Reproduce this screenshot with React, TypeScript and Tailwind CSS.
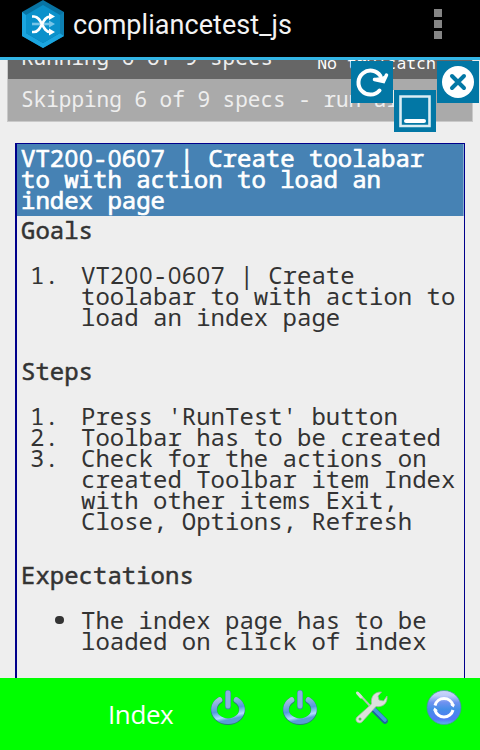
import React from "react";

const MONO = "font-['Droid_Sans_Mono','Noto_Sans_Mono','DejaVu_Sans_Mono',monospace]";

function AppLogo() {
  return (
    <svg className="ml-[21px] h-[49px] w-[44px] shrink-0" viewBox="0 0 44 49">
      <path d="M22 0 43 12 43 36 22 48 1 36 1 12Z" fill="#0873a3" />
      <path d="M1 12 5 15 5 33 22 43 39 33 43 36 22 48 1 36Z" fill="#1ba5df" />
      <path d="M39 15 43 12 43 36 39 33Z" fill="#0d7fb1" />
      <path d="M22 5 39 15 39 33 22 43 5 33 5 15Z" fill="#0a91cb" />
      <path d="M11 24H29" stroke="#76c5e8" strokeWidth="2.6" />
      <path d="M28 20.5 34 24 28 27.5Z" fill="#76c5e8" />
      <path d="M11 16.500h2c8 0 8 15.500 16 15.500M11 32h2c8 0 8-15.500 16-15.500" fill="none" stroke="#fff" strokeWidth="2.7" />
      <path d="M28 13 34 16.500 28 20ZM28 28.500 34 32 28 35.500Z" fill="#fff" />
    </svg>
  );
}

function PowerIcon({ id }: { id: string }) {
  return (
    <svg className="h-[38px] w-[38px]" viewBox="0 0 38 38">
      <defs>
        <linearGradient id={id} x1="0" y1="0" x2="0.3" y2="1">
          <stop offset="0" stopColor="#a9bde0" />
          <stop offset="0.55" stopColor="#5598dc" />
          <stop offset="0.85" stopColor="#b0dcff" />
          <stop offset="1" stopColor="#5b9cd8" />
        </linearGradient>
      </defs>
      <g fill="none" strokeLinecap="round">
        <path d="M10.500 11.500A14 11.800 0 1 0 27.500 11.500" stroke="#2a7f73" strokeWidth="6.400" />
        <path d="M10.500 11A14 11.800 0 1 0 27.500 11" stroke={`url(#${id})`} strokeWidth="5.600" />
        <path d="M19 4V17.500" stroke="#4789ae" strokeWidth="5.800" />
        <path d="M19 4V17" stroke="#8caee0" strokeWidth="4.800" />
      </g>
    </svg>
  );
}

function ToolsIcon() {
  return (
    <svg className="h-[38px] w-[38px]" viewBox="0 0 38 38">
      <g strokeLinecap="round">
        <path d="M6 5 19 19" stroke="#b8c4b8" strokeWidth="2" />
        <path d="M4.500 4 8 8" stroke="#d5ddd5" strokeWidth="3" />
        <path d="M21 21 32 32" stroke="#1f649b" strokeWidth="5.600" />
        <path d="M21 20 32 31" stroke="#4499dc" strokeWidth="3.600" />
      </g>
      <path
        d="M4 28 18.500 15C17.500 8 21 2.500 28.500 3L25 7 26 11 30.500 12 34 7C35 15 29 18.500 23 17.500L9 33C5 36 1 31 4 28Z"
        fill="#dde0dc"
        stroke="#9db69d"
        strokeWidth="0.800"
      />
      <circle cx="7" cy="30" r="1.500" fill="#55c955" />
    </svg>
  );
}

function RefreshBall() {
  return (
    <svg className="h-[38px] w-[38px]" viewBox="0 0 38 38">
      <defs>
        <linearGradient id="ball" x1="0" y1="0" x2="0" y2="1">
          <stop offset="0" stopColor="#cbd6fa" />
          <stop offset="0.150" stopColor="#bccbf8" />
          <stop offset="0.350" stopColor="#6f92f0" />
          <stop offset="0.550" stopColor="#448ee8" />
          <stop offset="0.850" stopColor="#5579f6" />
          <stop offset="1" stopColor="#5cb8eb" />
        </linearGradient>
      </defs>
      <circle cx="19" cy="18.500" r="17" fill="url(#ball)" stroke="#478fa0" strokeWidth="0.700" />
      <path d="M10 16.500A9.300 9.300 0 0 1 28 16.500M28 21A9.300 9.300 0 0 1 10 21" fill="none" stroke="#fff" strokeWidth="3" />
      <path d="M25 15.500h5L28.500 18.500ZM8 21.500h5L9.500 18.500Z" fill="#fff" />
    </svg>
  );
}

// Monospaced text whose zeros are drawn plain, without a slash.
function Mono({ text }: { text: string }) {
  return (
    <>
      {text.split(/(0)/).map((part, i) =>
        part === "0" ? (
          <span key={i} className="inline-block h-[21px] w-[0.6em] text-center align-top font-['Open_Sans','Noto_Sans',sans-serif]">0</span>
        ) : (
          part
        ),
      )}
    </>
  );
}

function Heading({ children }: { children: React.ReactNode }) {
  return <h3 className="[-webkit-text-stroke:0.5px_#333]">{children}</h3>;
}

function Item({ mark, lines }: { mark: string; lines: string[] }) {
  return (
    <li className="flex">
      {mark === "•" ? (
        <span className="mt-[7px] mr-[17px] ml-[34px] h-[8px] w-[9px] rounded-full bg-[#333]" />
      ) : (
        <span className="ml-[9px] w-[51px]">{mark}</span>
      )}
      <span>
        {lines.map((line) => (
          <span key={line} className="block h-[21px]"><Mono text={line} /></span>
        ))}
      </span>
    </li>
  );
}

export default function App() {
  return (
    <div className="relative flex h-[750px] w-[480px] flex-col overflow-hidden bg-[#eee]">
      <header className="flex h-[60px] shrink-0 border-b-[3px] border-[#33b5e5] bg-black">
        <AppLogo />
        <h1 className="mt-[7px] ml-[8px] w-[220px] whitespace-nowrap font-[Roboto,sans-serif] text-[27px] leading-[36px] tracking-[0.05px] text-[#f3f3f3]">
          compliancetest_js
        </h1>
        <div className="mt-[9px] ml-[141px] flex flex-col gap-[3px]">
          <i className="h-[8px] w-[8px] bg-[#858585]" />
          <i className="h-[8px] w-[8px] bg-[#858585]" />
          <i className="h-[8px] w-[8px] bg-[#858585]" />
        </div>
      </header>

      <main className={`flex h-[618px] shrink-0 flex-col overflow-hidden whitespace-pre ${MONO}`}>
        <div className="mx-[7px] h-[62px] shrink-0 overflow-hidden border-x border-b border-[#c9c9c9] bg-[#aaa] text-[21px] text-[#eee]">
          <div className="flex h-[19px] justify-between bg-[#666] pr-[36px] pl-[13px]">
            <span className="-mt-[15px] h-[24px] leading-[24px]">Running 6 of 9 specs</span>
            <span className="-mt-[7px] h-[20px] text-[16.500px] leading-[20px] text-white">No try/catch</span>
          </div>
          <div className="h-[42px] pl-[13px] leading-[40px]">Skipping 6 of 9 specs - run all</div>
        </div>

        <section className="mt-[21px] mr-[15px] ml-[15px] h-[560px] shrink-0 border-t border-r border-l-2 border-[#00008b] text-[24px] leading-[21px] text-[#333]">
          <h2 className="h-[72px] border-r border-[#87aed0] bg-[#4682b4] pt-[3px] pl-[4px] text-white [-webkit-text-stroke:0.7px_#fff]">
            <Mono text={"VT200-0607 | Create toolabar\nto with action to load an\nindex page"} />
          </h2>
          <div className="pt-[3px] pl-[4px]">
            <Heading>Goals</Heading>
            <ol className="mt-[24px] mb-[33px]">
              <Item mark="1." lines={["VT200-0607 | Create", "toolabar to with action to", "load an index page"]} />
            </ol>
            <Heading>Steps</Heading>
            <ol className="mt-[24px] mb-[33px]">
              <Item mark="1." lines={["Press 'RunTest' button"]} />
              <Item mark="2." lines={["Toolbar has to be created"]} />
              <Item mark="3." lines={["Check for the actions on", "created Toolbar item Index", "with other items Exit,", "Close, Options, Refresh"]} />
            </ol>
            <Heading>Expectations</Heading>
            <ul className="mt-[24px]">
              <Item mark="•" lines={["The index page has to be", "loaded on click of index"]} />
            </ul>
          </div>
        </section>
      </main>

      <footer className="flex h-[72px] shrink-0 bg-[#0f0] pt-[11px] pl-[108px]">
        <span className="mt-[7px] w-[101px] font-['Open_Sans',sans-serif] text-[26px] leading-[36px] tracking-[-0.400px] text-white">Index</span>
        <div className="flex gap-[34px]">
          <PowerIcon id="power-a" />
          <PowerIcon id="power-b" />
          <ToolsIcon />
          <RefreshBall />
        </div>
      </footer>

      <button className="absolute top-[61px] left-[351px] h-[42px] w-[42px] bg-[#0277a5]">
        <svg viewBox="0 0 42 42" fill="none" stroke="#fff">
          <path d="M28.500 29.500A12 12 0 1 1 29.500 15" strokeWidth="4" strokeLinecap="round" />
          <path d="M23.500 18.500 32.500 20.500 35.500 14" strokeWidth="3.500" strokeLinecap="round" />
          <path d="M23 17 33 21 36 14 30 16Z" fill="#fff" stroke="none" />
        </svg>
      </button>
      <button className="absolute top-[90px] left-[394px] h-[42px] w-[42px] bg-[#0277a5]">
        <svg viewBox="0 0 42 42" fill="none" stroke="#fff">
          <path d="M6.500 6.500H35.500V36H6.500Z" strokeWidth="2.600" stroke="#d9edf4" />
          <path d="M12 31H30" strokeWidth="4" strokeLinecap="round" />
        </svg>
      </button>
      <button className="absolute top-[61px] left-[437px] h-[42px] w-[42px] bg-[#0277a5]">
        <svg viewBox="0 0 42 42">
          <circle cx="21" cy="21" r="16" fill="#fff" />
          <path d="M15 15 27 27M27 15 15 27" stroke="#0277a5" strokeWidth="4" strokeLinecap="round" />
        </svg>
      </button>
    </div>
  );
}
